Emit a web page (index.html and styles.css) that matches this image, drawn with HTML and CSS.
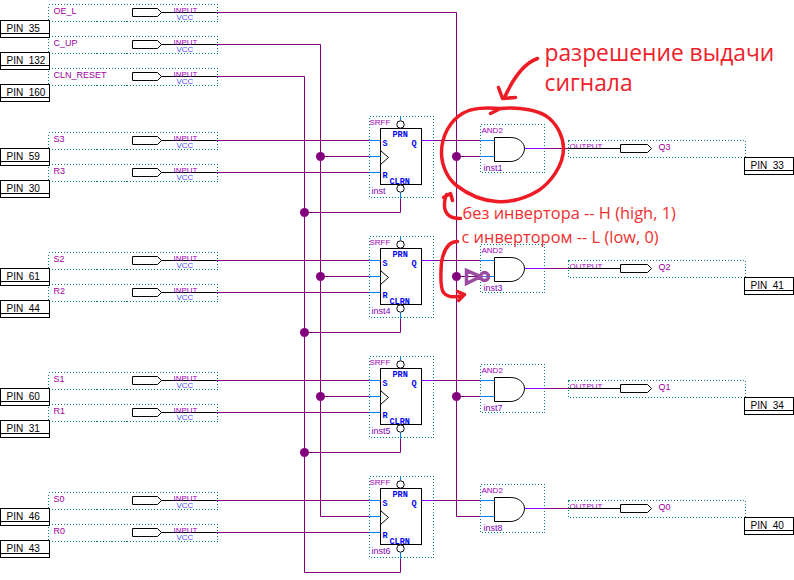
FILE: index.html
```html
<!DOCTYPE html>
<html lang="en">
<head>
    <meta charset="UTF-8">
    <title>Schematic</title>
    <link rel="stylesheet" href="styles.css">
</head>
<body>
<svg class="sheet" width="794" height="580" viewBox="-0.5 -0.5 794 580">
    <defs>
        <g id="input">
            <rect class="dots" x="48" y="-8" width="169" height="17"/>
            <path class="sym" d="M132 -4h25l4 4l-4 4h-25z"/>
            <path class="sym" d="M161 0h55"/>
        </g>
        <g id="output">
            <rect class="dots" x="568" y="-8" width="177" height="17"/>
            <path class="sym" d="M620 -4h27l4 4l-4 4h-27z"/>
            <path class="sym" d="M568 0h52"/>
        </g>
        <g id="pin">
            <rect class="sym" x="0" y="0" width="49" height="17"/>
            <path class="sym" d="M0 13h49"/>
        </g>
        <g id="srff">
            <rect class="dots" x="369" y="116" width="64" height="81"/>
            <rect class="sym" x="380" y="128" width="41" height="56"/>
            <path class="sym" d="M380 150l8 7l-8 7"/>
            <path class="stub" d="M369 140h11M369 156h11M369 172h11M400 116v4M400 192v6"/>
            <path class="out" d="M421 140h12"/>
            <circle class="sym" cx="400" cy="124" r="3.7"/>
            <circle class="sym" cx="400" cy="188" r="3.7"/>
        </g>
        <g id="and2">
            <rect class="dots" x="480" y="124" width="64" height="48"/>
            <path class="sym" d="M494 137h16c8 0 14 5 14 11s-6 13-14 13h-16z"/>
            <path class="stub" d="M480 140h14M480 156h14"/>
            <path class="out" d="M524 148h20"/>
        </g>
    </defs>

    <!-- nets -->
    <path class="wire" d="M216 12H456V516H480"/>
    <path class="wire" d="M216 44H320V516H369"/>
    <path class="wire" d="M216 76H304V572H400V558"/>
    <path class="wire" d="M216 140H369M216 172H369M433 140H480"/>
    <path class="wire" d="M216 260H369M216 292H369M433 260H480"/>
    <path class="wire" d="M216 380H369M216 412H369M433 380H480"/>
    <path class="wire" d="M216 500H369M216 532H369M433 500H480"/>
    <path class="wire" d="M400 198V212H304M400 318V332H304M400 438V452H304"/>
    <path class="wire" d="M320 156H369M320 276H369M320 396H369M456 156H480M456 276H480M456 396H480"/>
    <path class="wire" d="M544 148H568M544 268H568M544 388H568M544 508H568"/>
    <circle class="node" cx="320" cy="156" r="4.5"/>
    <circle class="node" cx="320" cy="276" r="4.5"/>
    <circle class="node" cx="320" cy="396" r="4.5"/>
    <circle class="node" cx="304" cy="212" r="4.5"/>
    <circle class="node" cx="304" cy="332" r="4.5"/>
    <circle class="node" cx="304" cy="452" r="4.5"/>
    <circle class="node" cx="456" cy="156" r="4.5"/>
    <circle class="node" cx="456" cy="276" r="4.5"/>
    <circle class="node" cx="456" cy="396" r="4.5"/>

    <!-- input pins -->
    <use href="#input" y="12"/>
    <use href="#input" y="44"/>
    <use href="#input" y="76"/>
    <use href="#input" y="140"/>
    <use href="#input" y="172"/>
    <use href="#input" y="260"/>
    <use href="#input" y="292"/>
    <use href="#input" y="380"/>
    <use href="#input" y="412"/>
    <use href="#input" y="500"/>
    <use href="#input" y="532"/>
    <g class="net">
        <text x="53" y="13">OE_L</text>
        <text x="53" y="45">C_UP</text>
        <text x="53" y="77">CLN_RESET</text>
        <text x="53" y="141">S3</text>
        <text x="53" y="173">R3</text>
        <text x="53" y="261">S2</text>
        <text x="53" y="293">R2</text>
        <text x="53" y="381">S1</text>
        <text x="53" y="413">R1</text>
        <text x="53" y="501">S0</text>
        <text x="53" y="533">R0</text>
        <text x="658" y="149">Q3</text>
        <text x="658" y="269">Q2</text>
        <text x="658" y="389">Q1</text>
        <text x="658" y="509">Q0</text>
    </g>
    <g class="kind">
        <text x="173" y="12">INPUT</text>
        <text x="173" y="44">INPUT</text>
        <text x="173" y="76">INPUT</text>
        <text x="173" y="140">INPUT</text>
        <text x="173" y="172">INPUT</text>
        <text x="173" y="260">INPUT</text>
        <text x="173" y="292">INPUT</text>
        <text x="173" y="380">INPUT</text>
        <text x="173" y="412">INPUT</text>
        <text x="173" y="500">INPUT</text>
        <text x="173" y="532">INPUT</text>
        <text x="569" y="148">OUTPUT</text>
        <text x="569" y="268">OUTPUT</text>
        <text x="569" y="388">OUTPUT</text>
        <text x="569" y="508">OUTPUT</text>
    </g>
    <g class="vcc">
        <text x="176" y="19">VCC</text>
        <text x="176" y="51">VCC</text>
        <text x="176" y="83">VCC</text>
        <text x="176" y="147">VCC</text>
        <text x="176" y="179">VCC</text>
        <text x="176" y="267">VCC</text>
        <text x="176" y="299">VCC</text>
        <text x="176" y="387">VCC</text>
        <text x="176" y="419">VCC</text>
        <text x="176" y="507">VCC</text>
        <text x="176" y="539">VCC</text>
    </g>

    <!-- output pins -->
    <use href="#output" y="148"/>
    <use href="#output" y="268"/>
    <use href="#output" y="388"/>
    <use href="#output" y="508"/>

    <!-- pin name boxes -->
    <use href="#pin" y="20"/>
    <use href="#pin" y="52"/>
    <use href="#pin" y="84"/>
    <use href="#pin" y="148"/>
    <use href="#pin" y="180"/>
    <use href="#pin" y="268"/>
    <use href="#pin" y="300"/>
    <use href="#pin" y="388"/>
    <use href="#pin" y="420"/>
    <use href="#pin" y="508"/>
    <use href="#pin" y="540"/>
    <use href="#pin" x="744" y="157"/>
    <use href="#pin" x="744" y="277"/>
    <use href="#pin" x="744" y="397"/>
    <use href="#pin" x="744" y="517"/>
    <g class="pin-name">
        <text x="6" y="31">PIN_35</text>
        <text x="6" y="63">PIN_132</text>
        <text x="6" y="95">PIN_160</text>
        <text x="6" y="159">PIN_59</text>
        <text x="6" y="191">PIN_30</text>
        <text x="6" y="279">PIN_61</text>
        <text x="6" y="311">PIN_44</text>
        <text x="6" y="399">PIN_60</text>
        <text x="6" y="431">PIN_31</text>
        <text x="6" y="519">PIN_46</text>
        <text x="6" y="551">PIN_43</text>
        <text x="750" y="168">PIN_33</text>
        <text x="750" y="288">PIN_41</text>
        <text x="750" y="408">PIN_34</text>
        <text x="750" y="528">PIN_40</text>
    </g>

    <!-- flip-flops -->
    <use href="#srff"/>
    <use href="#srff" y="120"/>
    <use href="#srff" y="240"/>
    <use href="#srff" y="360"/>
    <g class="port">
        <text x="382" y="145">S</text><text x="382" y="177">R</text><text x="411" y="145">Q</text><text x="392" y="136">PRN</text><text x="389" y="183">CLRN</text>
        <text x="382" y="265">S</text><text x="382" y="297">R</text><text x="411" y="265">Q</text><text x="392" y="256">PRN</text><text x="389" y="303">CLRN</text>
        <text x="382" y="385">S</text><text x="382" y="417">R</text><text x="411" y="385">Q</text><text x="392" y="376">PRN</text><text x="389" y="423">CLRN</text>
        <text x="382" y="505">S</text><text x="382" y="537">R</text><text x="411" y="505">Q</text><text x="392" y="496">PRN</text><text x="389" y="543">CLRN</text>
    </g>
    <g class="kind">
        <text x="369" y="124">SRFF</text>
        <text x="369" y="244">SRFF</text>
        <text x="369" y="364">SRFF</text>
        <text x="369" y="484">SRFF</text>
        <text x="481" y="132">AND2</text>
        <text x="481" y="252">AND2</text>
        <text x="481" y="372">AND2</text>
        <text x="481" y="492">AND2</text>
    </g>
    <g class="inst">
        <text x="371" y="193">inst</text>
        <text x="371" y="313">inst4</text>
        <text x="371" y="433">inst5</text>
        <text x="371" y="553">inst6</text>
        <text x="483" y="170">inst1</text>
        <text x="483" y="290">inst3</text>
        <text x="483" y="410">inst7</text>
        <text x="483" y="530">inst8</text>
    </g>

    <!-- gates -->
    <use href="#and2"/>
    <use href="#and2" y="120"/>
    <use href="#and2" y="240"/>
    <use href="#and2" y="360"/>

    <!-- hand drawn notes -->
    <path class="marker" d="M490 113L500 108C520 106 540 110 549 118C558 126 563 138 563 148C563 165 550 182 538 190C525 198 510 202 496 201C480 200 465 192 456 185C447 178 441 165 441 152C441 135 450 120 462 113C472 107 485 107 500 108"/>
    <path class="marker" d="M537 58C523 63 513 77 504 97M498 87L502 98L515 97"/>
    <path class="marker" d="M460 218C448 218 444 212 444 205C444 200 445 196 446 194M443 197L450 193L452 200"/>
    <path class="marker" d="M457 241C448 241 443 250 441 262C440 275 440 288 443 292C448 298 455 297 462 295M457 291L464 294L458 300"/>
    <path class="inverter" d="M466 270V283L480 276ZM480 276a4 4 0 1 0 8 0a4 4 0 1 0 -8 0"/>
    <g class="note-big">
        <text x="544" y="60">разрешение выдачи</text>
        <text x="544" y="90">сигнала</text>
    </g>
    <g class="note">
        <text x="462" y="218">без инвертора -- H (high, 1)</text>
        <text x="461" y="242">с инвертором -- L (low, 0)</text>
    </g>
</svg>
</body>
</html>
```

FILE: styles.css
```css
body {
    margin: 0;
    background: white;
}

.sheet {
    display: block;
    font-family: "Liberation Sans", Arial, sans-serif;
}

.dots {
    fill: none;
    stroke: #008080;
    stroke-dasharray: 1 2;
    shape-rendering: crispEdges;
}

.sym {
    fill: white;
    stroke: black;
}

path.sym {
    fill: none;
}

.wire {
    fill: none;
    stroke: #800080;
}

.stub {
    fill: none;
    stroke: #0080ff;
}

.out {
    fill: none;
    stroke: #8000ff;
}

.node {
    fill: #800080;
}

.net {
    font-size: 9px;
    fill: #a000a0;
}

.kind {
    font-size: 8px;
    fill: #a000c0;
}

.vcc {
    font-size: 8px;
    fill: #5050ff;
}

.inst {
    font-size: 9px;
    fill: #8000c0;
}

.pin-name {
    font-size: 10px;
    fill: black;
}

.port {
    font-family: "Liberation Mono", monospace;
    font-weight: bold;
    font-size: 8.5px;
    fill: #0000ff;
}

.marker {
    fill: none;
    stroke: #ed1c24;
    stroke-width: 3.5;
    stroke-linecap: round;
    stroke-linejoin: round;
}

.inverter {
    fill: none;
    stroke: #9b4ba0;
    stroke-width: 3.5;
}

.note-big {
    font-family: "Open Sans", sans-serif;
    font-size: 22.8px;
    fill: #f0202a;
}

.note {
    font-family: "Open Sans", sans-serif;
    font-size: 16.4px;
    fill: #f03030;
}
```
